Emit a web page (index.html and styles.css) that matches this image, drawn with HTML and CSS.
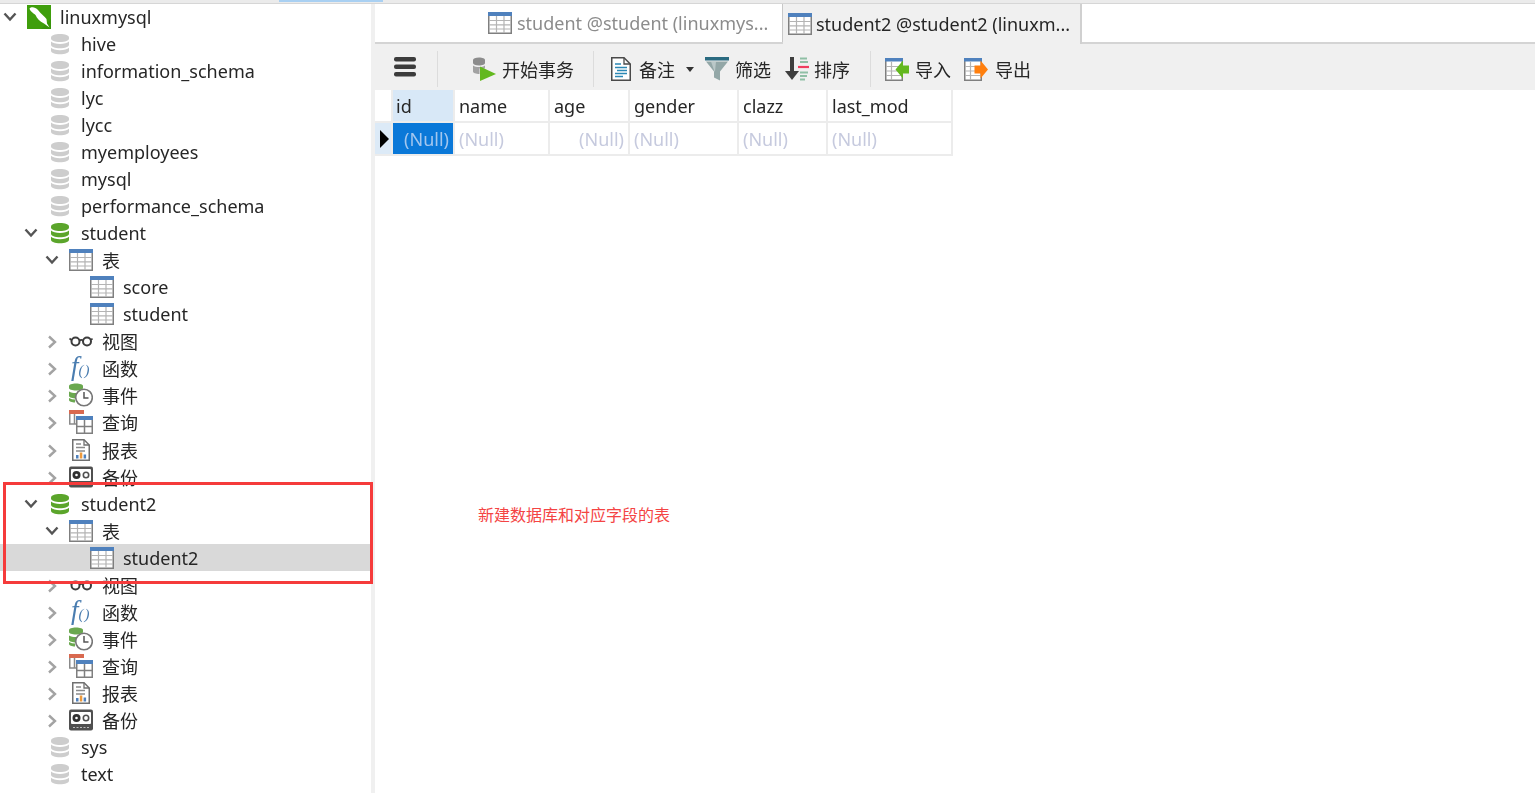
FILE: index.html
```html
<!DOCTYPE html>
<html lang="zh">
<head>
<meta charset="utf-8">
<title>Navicat</title>
<link rel="stylesheet" href="styles.css">
</head>
<body>
<svg class="defs" width="0" height="0" aria-hidden="true">
  <defs>
    <symbol id="i-open" viewBox="0 0 14 10"><path d="M1.5 1.5 7 7.5l5.5-6" fill="none" stroke="#555" stroke-width="2.4"/></symbol>
    <symbol id="i-closed" viewBox="0 0 10 14"><path d="M2 1.5 8 7l-6 5.5" fill="none" stroke="#a3a3a3" stroke-width="2.4"/></symbol>
    <symbol id="i-mysql" viewBox="0 0 24 24">
      <rect width="24" height="24" fill="#3f9e0c"/>
      <path d="M24 24V14L14 24z" fill="#2f8a06" opacity=".5"/>
      <path d="M2.500 3.500C4 1.500 8 1.500 11 5c3 4 6.500 6 8.500 9l.5 4.500 2.500 4-5.500-4C12.500 16.500 10 13.500 8.500 10 6.500 8 3.500 7 2.500 3.500z" fill="#fff"/>
    </symbol>
    <symbol id="i-db" viewBox="0 0 24 24">
      <path d="M3 5.500C3 3.500 7 2 12 2s9 1.500 9 3.500v1c0 2-4 3.500-9 3.500S3 8.500 3 6.500z"/>
      <path d="M3 9.500c1.500 1.500 5 2.500 9 2.500s7.500-1 9-2.500v3.200c0 2-4 3.500-9 3.500s-9-1.500-9-3.500z"/>
      <path d="M3 15.800c1.500 1.500 5 2.500 9 2.500s7.500-1 9-2.500v3c0 2-4 3.500-9 3.500s-9-1.500-9-3.500z"/>
    </symbol>
    <symbol id="i-table" viewBox="0 0 24 24">
      <rect x=".75" y="1.750" width="22.500" height="20.500" fill="#fff" stroke="#7f7f7f" stroke-width="1.500"/>
      <rect y="1" width="24" height="4" fill="#4f81bd"/>
      <path d="M8.500 5v17M16 5v17M1 9.500h22M1 13.800h22M1 18h22" stroke="#b4b4b4" stroke-width="1.200"/>
    </symbol>
    <symbol id="i-glasses" viewBox="0 0 24 24">
      <circle cx="6.500" cy="12.500" r="4" fill="none" stroke="#3d3d3d" stroke-width="2"/>
      <circle cx="18" cy="12.500" r="4" fill="none" stroke="#3d3d3d" stroke-width="2"/>
      <path d="M10.500 11.500q1.700-1.200 3.500 0M2.500 11 .5 9.500M22 11l1.500-1.500" fill="none" stroke="#3d3d3d" stroke-width="1.600"/>
    </symbol>
    <symbol id="i-event" viewBox="0 0 24 24">
      <path d="M0 3c0-1.500 3-2.500 7-2.500s7 1 7 2.500v2c0 1.500-3 2.500-7 2.500S0 6.500 0 5z" fill="#6aa84f"/>
      <path d="M0 8.500c2 1 4 1.500 7 1.500l3 0-3 5.500H7c-3 0-7-1-7-2.500z" fill="#6aa84f"/>
      <path d="M0 15c2 1 4 1.500 6 1.500v3c-3 0-6-1-6-2.500z" fill="#6aa84f"/>
      <circle cx="15" cy="14.500" r="8.300" fill="#fff" stroke="#777" stroke-width="1.600"/>
      <path d="M15 9v6h4.500" fill="none" stroke="#555" stroke-width="1.500"/>
    </symbol>
    <symbol id="i-query" viewBox="0 0 24 24">
      <rect y="0" width="15" height="4" fill="#d9694f"/>
      <path d="M.75 4V14H7M5.500 4V14" fill="none" stroke="#8a8a8a" stroke-width="1.500"/>
      <rect x="7.750" y="6.750" width="15.500" height="16.500" fill="#fff" stroke="#7f7f7f" stroke-width="1.500"/>
      <rect x="7" y="6" width="17" height="4" fill="#4f81bd"/>
      <path d="M15.500 10v13M8 16.500h15" stroke="#7f7f7f" stroke-width="1.500"/>
    </symbol>
    <symbol id="i-report" viewBox="0 0 24 24">
      <path d="M3.750 1.750H15l5.250 5.250v15.250H3.750z" fill="#fff" stroke="#707070" stroke-width="1.500"/>
      <path d="M15 1.750V7h5.250" fill="none" stroke="#707070" stroke-width="1.300"/>
      <path d="M7 6h5M7 9.500h9M7 13h9" stroke="#8a8a8a" stroke-width="1.300"/>
      <rect x="7" y="17" width="2.500" height="3.500" fill="#4f81bd"/>
      <rect x="10.800" y="14.500" width="2.500" height="6" fill="#ed9a3c"/>
      <rect x="14.600" y="16.500" width="2.500" height="4" fill="#4f81bd"/>
    </symbol>
    <symbol id="i-backup" viewBox="0 0 24 24">
      <rect y="1.500" width="24" height="21" rx="2" fill="#505050"/>
      <rect x="2" y="4" width="20" height="12" rx="1" fill="#fff"/>
      <circle cx="7.500" cy="10" r="4" fill="#303030"/>
      <circle cx="7.500" cy="10" r="1.300" fill="#fff"/>
      <circle cx="17" cy="10" r="2.700" fill="none" stroke="#505050" stroke-width="1.600"/>
      <path d="M4 19.500h16" stroke="#bbb" stroke-width="1.200" stroke-dasharray="2 1.500"/>
    </symbol>
    <symbol id="i-menu" viewBox="0 0 22 20">
      <rect y="0" width="22" height="4.500" rx="2" fill="#3c3c3c"/>
      <rect y="7.500" width="22" height="4.500" rx="2" fill="#3c3c3c"/>
      <rect y="15" width="22" height="4.500" rx="2" fill="#3c3c3c"/>
    </symbol>
    <symbol id="i-begin" viewBox="0 0 24 24">
      <path d="M1 3c0-1.500 2.500-2.500 6-2.500s6 1 6 2.500v3c0 1.500-2.500 2.500-6 2.500S1 7.500 1 6z" fill="#8c8c8c"/>
      <path d="M1 8.500c1.500 1 3.500 1.500 6 1.500s4.500-.5 6-1.500v3H7.500v5.500C4 17 1 16 1 14.500z" fill="#a2a2a2"/>
      <path d="M8 9.500 24 17 8 24z" fill="#63b81e"/>
    </symbol>
    <symbol id="i-note" viewBox="0 0 24 24">
      <path d="M2.750 .75H15l6.250 6.250v16.250H2.750z" fill="#fff" stroke="#4a4a4a" stroke-width="1.500"/>
      <path d="M15 .75V7h6.250" fill="none" stroke="#4a4a4a" stroke-width="1.300"/>
      <path d="M6 7h6M6 10.500h12M8 13.500h10M6 16.500h12M6 19.500h8" stroke="#2b88b5" stroke-width="1.700"/>
    </symbol>
    <symbol id="i-filter" viewBox="0 0 24 24">
      <path d="M1 4.500h22l-8 10v9l-6-3v-6z" fill="#93a7a7"/>
      <path d="M6 4.500h5l-1 10H9.500z" fill="#cbd6d6" opacity=".7"/>
      <rect y="0" width="24" height="3.500" fill="#2a6a80"/>
    </symbol>
    <symbol id="i-sort" viewBox="0 0 24 24">
      <path d="M7 0v15" stroke="#3e3e3e" stroke-width="4"/>
      <path d="M0 14h14l-7 9z" fill="#3e3e3e"/>
      <path d="M15 1.500h7M15 5h8M15 15.500h8M15 19h7M15 22.500h5" stroke="#8fbfa5" stroke-width="2"/>
      <path d="M13 10h11" stroke="#ef3f5f" stroke-width="2.200"/>
    </symbol>
    <symbol id="i-import" viewBox="0 0 24 24">
      <rect x=".75" y="1.750" width="16.500" height="21.500" fill="#fff" stroke="#7f7f7f" stroke-width="1.500"/>
      <rect y="1" width="18" height="3.500" fill="#4f81bd"/>
      <path d="M6.500 4.500V23M1 9.500h16M1 14h16M1 18.500h16" stroke="#b4b4b4" stroke-width="1.200"/>
      <path d="M10.500 12.500 18 3.500v5h6v8h-6v5z" fill="#63b81e"/>
    </symbol>
    <symbol id="i-export" viewBox="0 0 24 24">
      <rect x=".75" y="1.750" width="16.500" height="21.500" fill="#fff" stroke="#7f7f7f" stroke-width="1.500"/>
      <rect y="1" width="18" height="3.500" fill="#4f81bd"/>
      <path d="M6.500 4.500V23M1 9.500h16M1 14h16M1 18.500h16" stroke="#b4b4b4" stroke-width="1.200"/>
      <path d="M24 12.500 16.500 3.500v5h-6v8h6v5z" fill="#ff7f0e"/>
    </symbol>
  </defs>
</svg>

<div class="app">
  <div class="topstrip"><div class="topstrip-mark"></div></div>
  <div class="workspace">
    <nav class="tree">
      <div class="row"><svg class="chev-open"><use href="#i-open"/></svg><svg class="icon"><use href="#i-mysql"/></svg><span>linuxmysql</span></div>
      <div class="row l1"><span class="chev"></span><svg class="icon db-off"><use href="#i-db"/></svg><span>hive</span></div>
      <div class="row l1"><span class="chev"></span><svg class="icon db-off"><use href="#i-db"/></svg><span>information_schema</span></div>
      <div class="row l1"><span class="chev"></span><svg class="icon db-off"><use href="#i-db"/></svg><span>lyc</span></div>
      <div class="row l1"><span class="chev"></span><svg class="icon db-off"><use href="#i-db"/></svg><span>lycc</span></div>
      <div class="row l1"><span class="chev"></span><svg class="icon db-off"><use href="#i-db"/></svg><span>myemployees</span></div>
      <div class="row l1"><span class="chev"></span><svg class="icon db-off"><use href="#i-db"/></svg><span>mysql</span></div>
      <div class="row l1"><span class="chev"></span><svg class="icon db-off"><use href="#i-db"/></svg><span>performance_schema</span></div>

      <div class="row l1"><svg class="chev-open"><use href="#i-open"/></svg><svg class="icon db-on"><use href="#i-db"/></svg><span>student</span></div>
      <div class="row l2"><svg class="chev-open"><use href="#i-open"/></svg><svg class="icon"><use href="#i-table"/></svg><span>表</span></div>
      <div class="row l3"><span class="chev"></span><svg class="icon"><use href="#i-table"/></svg><span>score</span></div>
      <div class="row l3"><span class="chev"></span><svg class="icon"><use href="#i-table"/></svg><span>student</span></div>
      <div class="row l2"><svg class="chev-closed"><use href="#i-closed"/></svg><svg class="icon"><use href="#i-glasses"/></svg><span>视图</span></div>
      <div class="row l2"><svg class="chev-closed"><use href="#i-closed"/></svg><span class="fx">f<small class="fx-args">()</small></span><span>函数</span></div>
      <div class="row l2"><svg class="chev-closed"><use href="#i-closed"/></svg><svg class="icon"><use href="#i-event"/></svg><span>事件</span></div>
      <div class="row l2"><svg class="chev-closed"><use href="#i-closed"/></svg><svg class="icon"><use href="#i-query"/></svg><span>查询</span></div>
      <div class="row l2"><svg class="chev-closed"><use href="#i-closed"/></svg><svg class="icon"><use href="#i-report"/></svg><span>报表</span></div>
      <div class="row l2"><svg class="chev-closed"><use href="#i-closed"/></svg><svg class="icon"><use href="#i-backup"/></svg><span>备份</span></div>

      <div class="row l1"><svg class="chev-open"><use href="#i-open"/></svg><svg class="icon db-on"><use href="#i-db"/></svg><span>student2</span></div>
      <div class="row l2"><svg class="chev-open"><use href="#i-open"/></svg><svg class="icon"><use href="#i-table"/></svg><span>表</span></div>
      <div class="row l3 selected"><span class="chev"></span><svg class="icon"><use href="#i-table"/></svg><span>student2</span></div>
      <div class="row l2"><svg class="chev-closed"><use href="#i-closed"/></svg><svg class="icon"><use href="#i-glasses"/></svg><span>视图</span></div>
      <div class="row l2"><svg class="chev-closed"><use href="#i-closed"/></svg><span class="fx">f<small class="fx-args">()</small></span><span>函数</span></div>
      <div class="row l2"><svg class="chev-closed"><use href="#i-closed"/></svg><svg class="icon"><use href="#i-event"/></svg><span>事件</span></div>
      <div class="row l2"><svg class="chev-closed"><use href="#i-closed"/></svg><svg class="icon"><use href="#i-query"/></svg><span>查询</span></div>
      <div class="row l2"><svg class="chev-closed"><use href="#i-closed"/></svg><svg class="icon"><use href="#i-report"/></svg><span>报表</span></div>
      <div class="row l2"><svg class="chev-closed"><use href="#i-closed"/></svg><svg class="icon"><use href="#i-backup"/></svg><span>备份</span></div>

      <div class="row l1"><span class="chev"></span><svg class="icon db-off"><use href="#i-db"/></svg><span>sys</span></div>
      <div class="row l1"><span class="chev"></span><svg class="icon db-off"><use href="#i-db"/></svg><span>text</span></div>
    </nav>

    <main class="main">
      <div class="tabs">
        <div class="tab"><svg class="icon"><use href="#i-table"/></svg><span>student @student (linuxmys...</span></div>
        <div class="tab active"><svg class="icon"><use href="#i-table"/></svg><span>student2 @student2 (linuxm...</span></div>
      </div>
      <div class="toolbar">
        <svg class="menu"><use href="#i-menu"/></svg>
        <i class="sep s-first"></i>
        <div class="tool t-begin"><svg class="icon"><use href="#i-begin"/></svg><span>开始事务</span></div>
        <i class="sep s-second"></i>
        <div class="tool t-note"><svg class="icon"><use href="#i-note"/></svg><span>备注</span></div>
        <i class="caret"></i>
        <div class="tool t-filter"><svg class="icon"><use href="#i-filter"/></svg><span>筛选</span></div>
        <div class="tool t-sort"><svg class="icon"><use href="#i-sort"/></svg><span>排序</span></div>
        <i class="sep s-third"></i>
        <div class="tool t-import"><svg class="icon"><use href="#i-import"/></svg><span>导入</span></div>
        <div class="tool t-export"><svg class="icon"><use href="#i-export"/></svg><span>导出</span></div>
      </div>
      <div class="grid">
        <div class="hd corner"></div>
        <div class="hd hd-sel">id</div>
        <div class="hd">name</div>
        <div class="hd">age</div>
        <div class="hd">gender</div>
        <div class="hd">clazz</div>
        <div class="hd">last_mod</div>
        <div class="cell rowhead"><i class="pointer"></i></div>
        <div class="cell num current">(Null)</div>
        <div class="cell">(Null)</div>
        <div class="cell num">(Null)</div>
        <div class="cell">(Null)</div>
        <div class="cell">(Null)</div>
        <div class="cell">(Null)</div>
      </div>
    </main>
  </div>
</div>

<div class="redbox"></div>
<div class="note">新建数据库和对应字段的表</div>
</body>
</html>
```

FILE: styles.css
```css
* { box-sizing: border-box; }

html, body {
  margin: 0;
  height: 100%;
  overflow: hidden;
  background: #fff;
}

body {
  position: relative;
  font-family: "Noto Sans", "Noto Sans CJK SC", sans-serif;
  font-size: 18px;
  color: #262626;
}

.defs { position: absolute; }

.app {
  height: 793px;
  display: flex;
  flex-direction: column;
  filter: blur(0.4px);
}

.topstrip {
  height: 4px;
  flex: none;
  background: #ebebeb;
  border-bottom: 1px solid #d6d6d6;
}

.topstrip-mark {
  width: 104px;
  height: 2px;
  margin-left: 279px;
  background: #a9d0f2;
}

.workspace {
  flex: 1;
  display: flex;
  min-height: 0;
}

/* navigation tree */
.tree {
  width: 375px;
  flex: none;
  overflow: hidden;
  margin-top: -0.5px;
  border-right: 4px solid #f0f0f0;
}

.row {
  height: 27.04px;
  display: flex;
  align-items: center;
  white-space: nowrap;
}

.row.l1 { padding-left: 21px; }
.row.l2 { padding-left: 42px; }
.row.l3 { padding-left: 63px; }
.row.selected { background: #d9d9d9; }

.chev { width: 21px; flex: none; }

.chev-open {
  width: 14px;
  height: 10px;
  flex: none;
  margin: 0 4px 0 3px;
}

.chev-closed {
  width: 10px;
  height: 14px;
  flex: none;
  margin: 2px 6px 0 5px;
}

.icon {
  width: 24px;
  height: 24px;
  flex: none;
}

.row .icon { margin: 0 9px 0 6px; }

.db-off { color: #cdcdcd; fill: #cdcdcd; }
.db-on { fill: #5ba52b; }

.fx {
  width: 24px;
  flex: none;
  margin: 0 9px 0 6px;
  padding-left: 2px;
  font-family: "Liberation Serif", serif;
  font-style: italic;
  font-size: 27px;
  line-height: 24px;
  color: #4a7db0;
}

.fx-args { font-size: 15px; letter-spacing: 1px; }

/* tabs */
.main {
  flex: 1;
  min-width: 0;
  display: flex;
  flex-direction: column;
}

.tabs {
  height: 40px;
  flex: none;
  display: flex;
  align-items: stretch;
  padding-left: 103px;
  border-bottom: 2px solid #d4d4d4;
}

.tab {
  width: 305px;
  display: flex;
  align-items: center;
  gap: 5px;
  padding-left: 10px;
  color: #8c8c8c;
  white-space: nowrap;
  border-right: 1px solid #c8c8c8;
}

.tab.active {
  width: 299px;
  padding-left: 5px;
  gap: 4px;
  margin-bottom: -2px;
  color: #262626;
  background: #f0f0f0;
  border-right: 2px solid #d0d0d0;
}

/* toolbar */
.toolbar {
  height: 46px;
  flex: none;
  display: flex;
  align-items: center;
  padding: 4px 0 0 19px;
  background: #f0f0f0;
}

.menu {
  width: 22px;
  height: 20px;
  flex: none;
  margin-top: -4px;
}

.sep {
  width: 1px;
  height: 36px;
  flex: none;
  background: #dcdcdc;
}

.s-first { margin-left: 21px; }
.s-second { margin-left: 19px; }
.s-third { margin-left: 20px; }

.tool {
  display: flex;
  align-items: center;
  gap: 6px;
  white-space: nowrap;
}

.t-begin { margin-left: 34px; }
.t-note { margin-left: 15px; }
.t-filter { margin-left: 11px; }
.t-sort { margin-left: 14px; gap: 5px; }
.t-import { margin-left: 14px; }
.t-export { margin-left: 13px; gap: 7px; }

.caret {
  width: 0;
  height: 0;
  flex: none;
  margin-left: 11px;
  border-left: 4.5px solid transparent;
  border-right: 4.5px solid transparent;
  border-top: 5px solid #333;
}

/* data grid */
.grid {
  display: grid;
  grid-template-columns: 18px 62px 95px 80px 109px 89px 125px;
  grid-template-rows: 33px 33px;
  width: max-content;
}

.hd, .cell {
  display: flex;
  align-items: center;
  padding: 0 4px;
  border-right: 2px solid #ececec;
  border-bottom: 2px solid #ececec;
  white-space: nowrap;
}

.hd { color: #262626; }
.hd-sel { background: #d8e8f7; padding-left: 3px; }
.corner { padding: 0; }

.cell { color: #c6cade; }

.cell.num { justify-content: flex-end; padding-right: 4px; }

.cell.current {
  background: #0a78d8;
  color: #a3c6ee;
}

.rowhead {
  background: #dceaf7;
  padding: 0 0 0 5px;
}

.pointer {
  width: 0;
  height: 0;
  border-top: 9px solid transparent;
  border-bottom: 9px solid transparent;
  border-left: 9px solid #000;
}

/* annotation laid over the screenshot */
.redbox {
  position: absolute;
  left: 3px;
  top: 482px;
  width: 370px;
  height: 102px;
  border: 3px solid #f53b3b;
}

.note {
  position: absolute;
  left: 478px;
  top: 503px;
  font-family: "Noto Sans CJK SC", sans-serif;
  font-size: 16px;
  line-height: 22px;
  color: #f44444;
}
```
